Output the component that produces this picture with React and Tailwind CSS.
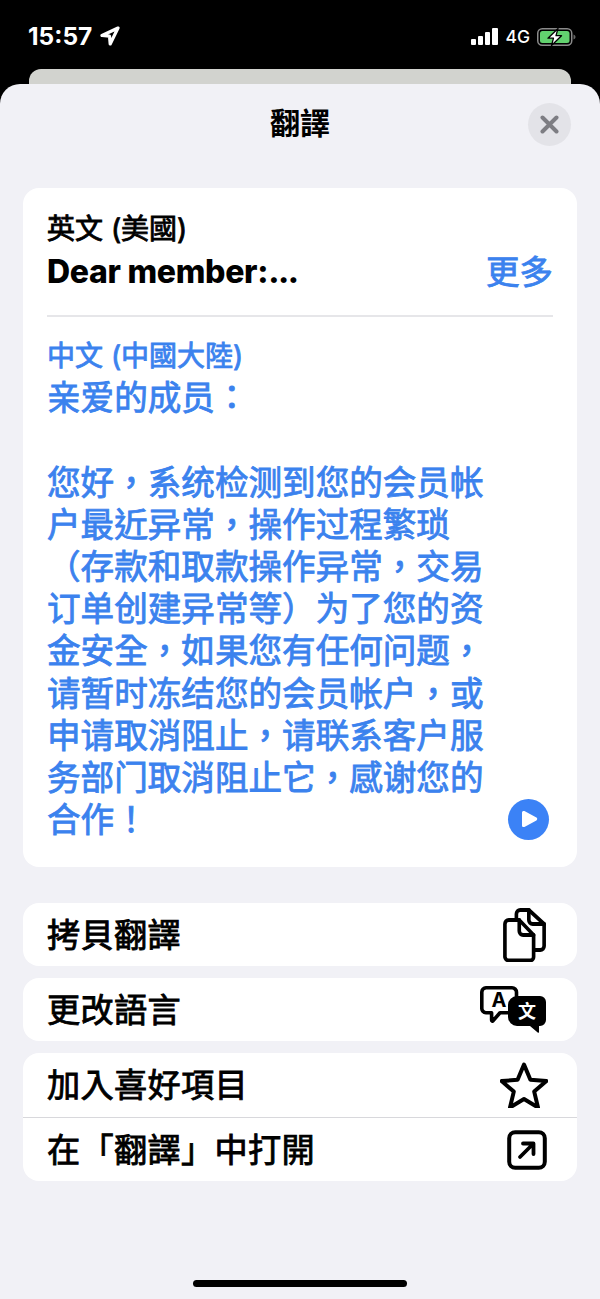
import React from 'react';

const FONT = "font-['Inter','Noto_Sans_CJK_TC',sans-serif]";
const HALF_BOLD = 'font-normal [-webkit-text-stroke:0.85px_currentColor]';

const lines = [
  '您好，系统检测到您的会员帐',
  '户最近异常，操作过程繁琐',
  '（存款和取款操作异常，交易',
  '订单创建异常等）为了您的资',
  '金安全，如果您有任何问题，',
  '请暂时冻结您的会员帐户，或',
  '申请取消阻止，请联系客户服',
  '务部门取消阻止它，感谢您的',
  '合作！',
];

const CopyIcon = () => (
  <svg width="44" height="54" viewBox="0 0 46 54" preserveAspectRatio="none" fill="none" stroke="black" strokeWidth="3.800" strokeLinejoin="round" strokeLinecap="round">
    <path d="M14 12V6a4 4 0 0 1 4-4h9l16 14v22a4 4 0 0 1-4 4h-6" />
    <path d="M27 2v10a4 4 0 0 0 4 4h12" />
    <path d="M6 12h11l15 15v22a3.500 3.500 0 0 1-3.500 3.500H6A4 4 0 0 1 2 49V16a4 4 0 0 1 4-4z" fill="white" />
    <path d="M17 12v11a4 4 0 0 0 4 4h11" />
  </svg>
);

const TranslateIcon = () => (
  <svg width="67" height="47" viewBox="0 0 67 47">
    <path d="M6 1.800h26a4.500 4.500 0 0 1 4.500 4.500v16a4.500 4.500 0 0 1-4.500 4.500H20l-7 8a.8.8 0 0 1-1.400-.5v-7.500H6A4.500 4.500 0 0 1 1.800 22V6A4.500 4.500 0 0 1 6 1.800z" fill="white" stroke="black" strokeWidth="3.600" strokeLinejoin="round" />
    <text x="19" y="21" textAnchor="middle" fontSize="20" fontWeight="700" fontFamily="Inter, sans-serif" fill="black">A</text>
    <path d="M37 10h23a6 6 0 0 1 6 6v18a6 6 0 0 1-6 6h-1v6a.8.8 0 0 1-1.300.6L50 40H37a9 9 0 0 1-9-9V19a9 9 0 0 1 9-9z" fill="black" />
    <text x="47" y="32" textAnchor="middle" fontSize="18" fontWeight="700" fontFamily="Noto Sans CJK TC, sans-serif" fill="white">文</text>
  </svg>
);

const StarIcon = () => (
  <svg width="48" height="46" viewBox="0 0 48 46" fill="none" stroke="black" strokeWidth="4" strokeLinejoin="round">
    <path d="M24 2.500l6.400 15.300 16 1.300-12.200 10.500 3.800 15.900L24 37l-14 8.500 3.800-15.900L1.600 19.100l16-1.300z" />
  </svg>
);

const OpenIcon = () => (
  <svg width="40" height="40" viewBox="0 0 40 40" fill="none" stroke="black" strokeLinecap="round" strokeLinejoin="round">
    <rect x="2.200" y="2.200" width="35.600" height="35.600" rx="6" strokeWidth="4" />
    <path d="M13 27L26 14M16 13.500h10.500V24" strokeWidth="3.800" />
  </svg>
);

const Row = ({ label, children, height = 'h-[63px]', right = 'pr-[30px]' }) => (
  <div className={`${height} flex items-center justify-between pl-6 ${right}`}>
    <span className={`text-[33.200px] leading-[44px] text-black tracking-[0.3px] ${HALF_BOLD}`}>{label}</span>
    {children}
  </div>
);

export default function App() {
  return (
    <div className={`w-[600px] h-[1299px] bg-black overflow-hidden flex flex-col ${FONT}`}>
      {/* status bar */}
      <div className="h-[69px] flex items-start justify-between pl-7 pr-6 pt-[22px] text-white">
        <div className="flex items-center gap-2">
          <span className="text-[24.500px] leading-[28px] font-bold">15:57</span>
          <svg width="20" height="20" viewBox="0 0 20 20" fill="none" stroke="white" strokeWidth="3.200" strokeLinejoin="round">
            <path d="M18 2L2 9.500l7.500.6.700 7.900z" />
          </svg>
        </div>
        <div className="flex items-center gap-[6px] h-[28px]">
          <div className="flex items-end gap-[2px] h-[16px] mt-[1px]">
            <div className="w-[5px] h-[6px] bg-white rounded-[1px]" />
            <div className="w-[5px] h-[9px] bg-white rounded-[1px]" />
            <div className="w-[5px] h-[13px] bg-white rounded-[1px]" />
            <div className="w-[6px] h-[17px] bg-white rounded-[1px]" />
          </div>
          <span className="text-[17.500px] font-medium leading-none ml-[1px] mt-[1px]">4G</span>
          <svg width="39" height="18" viewBox="0 0 39 18" className="ml-[1px] mt-[1px]">
            <rect x="0.750" y="0.750" width="34" height="16.500" rx="4.500" fill="none" stroke="#8a8a8a" strokeWidth="1.500" />
            <rect x="3" y="3" width="29.500" height="12" rx="2.500" fill="#62d26f" />
            <path d="M36.500 6.500c1.400.4 2 1.400 2 2.500s-.6 2.100-2 2.500z" fill="#666" />
            <path d="M21 0.500L11 10.200h5.500L14.500 17.500l10-9.800h-5.500z" fill="white" stroke="black" strokeWidth="1.300" strokeLinejoin="round" />
          </svg>
        </div>
      </div>

      {/* page behind the sheet */}
      <div className="mx-[29px] h-[15px] rounded-t-[12px] bg-[#d2d3cf]" />

      {/* sheet */}
      <div className="flex-1 bg-[#f1f1f6] rounded-t-[20px] px-[23px] flex flex-col relative">
        <div className="h-[104px] relative flex items-start justify-center pt-[20px] shrink-0">
          <span className="text-[30px] leading-[38px] font-bold text-black">翻譯</span>
          <div className="absolute right-[6px] top-[19px] w-[43px] h-[43px] rounded-full bg-[#e3e3e8] flex items-center justify-center">
            <svg width="19" height="19" viewBox="0 0 19 19" stroke="#7d7d83" strokeWidth="4" strokeLinecap="round">
              <path d="M2.500 2.500l14 14M16.500 2.500l-14 14" />
            </svg>
          </div>
        </div>

        {/* translation card */}
        <div className="h-[679px] bg-white rounded-[16px] px-6 pt-[23px] flex flex-col shrink-0">
          <div className={`text-[28px] leading-[36px] text-black ${HALF_BOLD}`}>英文 (美國)</div>
          <div className="flex items-center justify-between mt-[5px] h-[40px]">
            <span className="text-[32px] leading-[40px] font-extrabold text-black tracking-[-0.3px]">
              Dear member:<span className="tracking-[-1.500px]">...</span>
            </span>
            <span className={`text-[33.500px] leading-[40px] text-[#3b82ee] ${HALF_BOLD}`}>更多</span>
          </div>
          <div className="h-[2px] bg-[#e6e6e9] mt-[23px]" />
          <div className={`mt-[21px] text-[28px] leading-[36px] text-[#3b82ee] ${HALF_BOLD}`}>中文 (中國大陸)</div>
          <div className={`text-[33.600px] leading-[42.100px] text-[#3b82ee] mt-[3px] whitespace-nowrap ${HALF_BOLD}`}>
            <div>亲爱的成员：</div>
            <div className="h-[43px]" />
            {lines.map((line) => (
              <div key={line}>{line}</div>
            ))}
          </div>
          <div className="flex justify-end mt-[-42px] mr-[4px]">
            <div className="w-[41px] h-[41px] rounded-full bg-[#3b82f6] flex items-center justify-center pl-[2px]">
              <svg width="17" height="18" viewBox="0 0 17 18" fill="white">
                <path d="M1 2.500c0-1.300 1.300-2 2.400-1.400l12 6.500c1.100.6 1.100 2.200 0 2.800l-12 6.500C2.300 17.500 1 16.800 1 15.500z" />
              </svg>
            </div>
          </div>
        </div>

        {/* actions */}
        <div className="mt-9 flex flex-col gap-3">
          <div className="bg-white rounded-[16px]">
            <Row label="拷貝翻譯"><CopyIcon /></Row>
          </div>
          <div className="bg-white rounded-[16px]">
            <Row label="更改語言"><TranslateIcon /></Row>
          </div>
          <div className="bg-white rounded-[16px]">
            <Row label="加入喜好項目" height="h-[64px]" right="pr-[29px]"><StarIcon /></Row>
            <div className="h-px bg-[#d8d8dc]" />
            <Row label="在「翻譯」中打開"><OpenIcon /></Row>
          </div>
        </div>

        {/* home indicator */}
        <div className="absolute bottom-[12px] left-[193px] w-[214px] h-[7px] rounded-full bg-black" />
      </div>
    </div>
  );
}
